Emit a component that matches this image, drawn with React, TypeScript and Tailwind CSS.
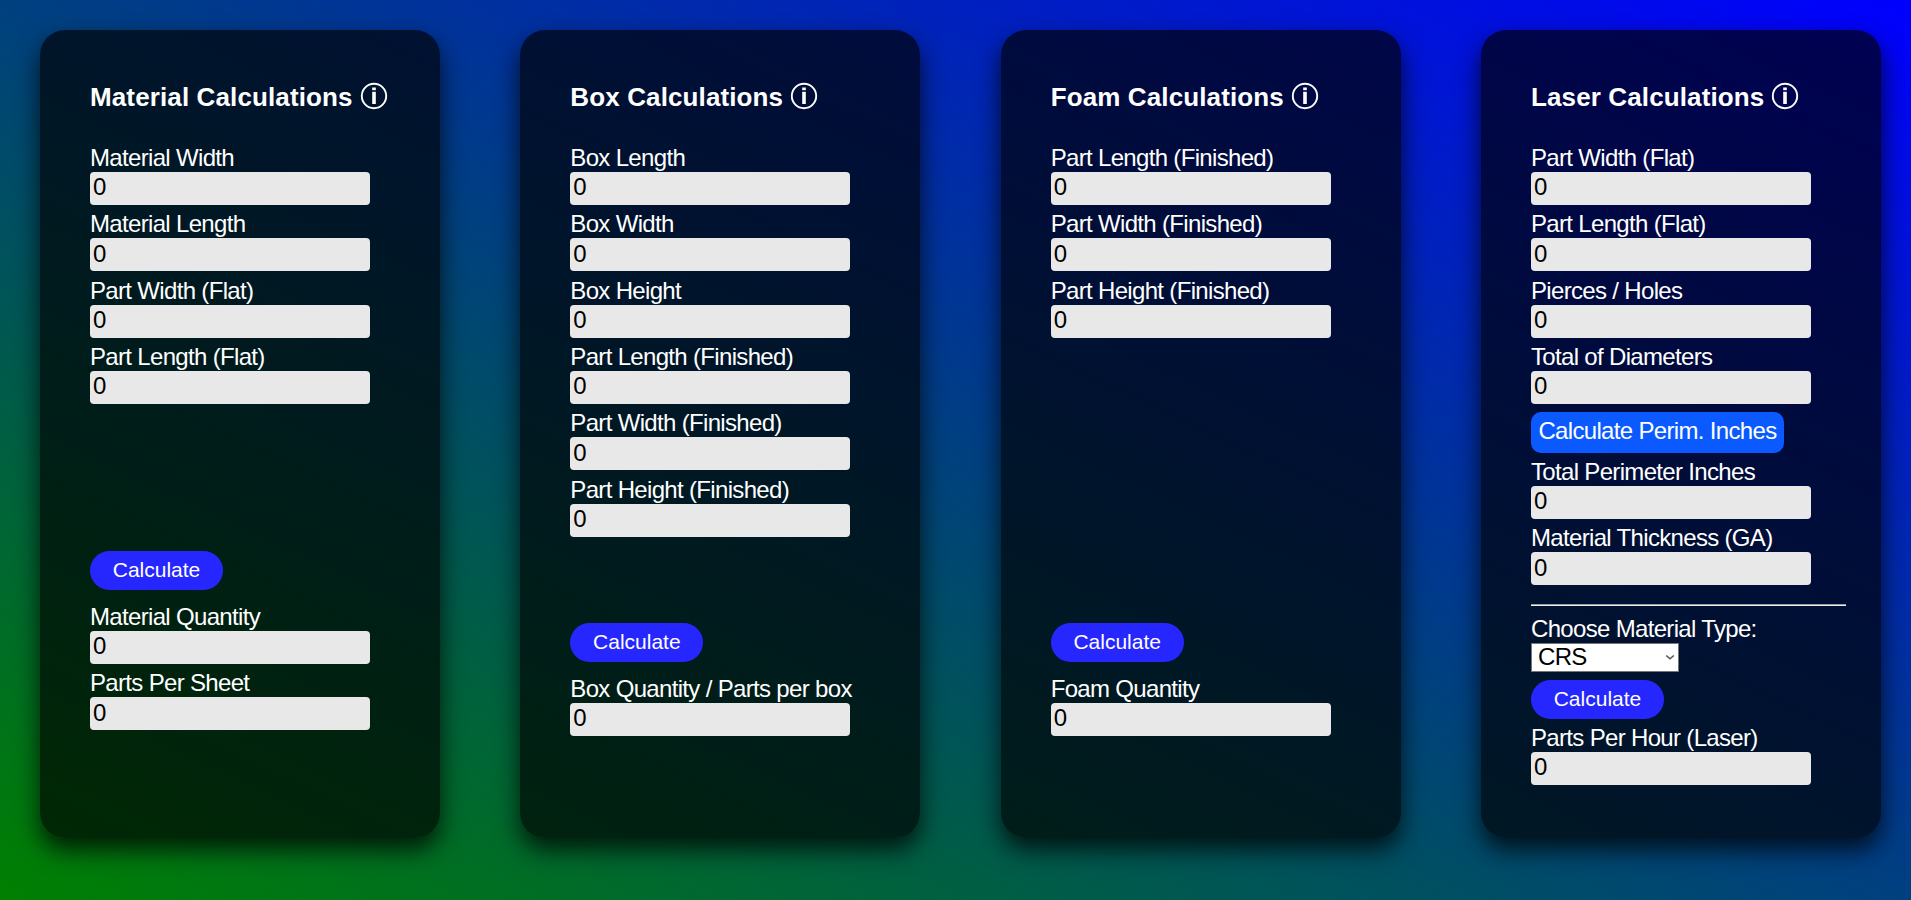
import { useState } from "react";

function InfoIcon() {
  return (
    <svg className="mt-[2.3px] ml-[7px] h-[28px] w-[28px] shrink-0" viewBox="0 0 28 28" fill="none">
      <circle cx="14" cy="14" r="12.2" stroke="white" strokeWidth="1.9" />
      <rect x="12.2" y="5.5" width="3.6" height="2.7" fill="white" />
      <rect x="12.2" y="9.8" width="3.6" height="12.2" fill="white" />
    </svg>
  );
}

function Title({ text }: { text: string }) {
  return (
    <h2 className="flex h-[58.67px] items-start whitespace-nowrap text-[26px] leading-[35px] font-bold tracking-[0.12px] text-white">
      <span>{text}</span>
      <InfoIcon />
    </h2>
  );
}

function Label({ text }: { text: string }) {
  return (
    <span className="block h-[27px] whitespace-nowrap text-[24px] leading-[25px] tracking-[-0.67px] text-white">
      {text}
    </span>
  );
}

function Field({ label }: { label: string }) {
  const [value, setValue] = useState("0");
  return (
    <label className="block h-[66.33px] pt-[6.33px]">
      <Label text={label} />
      <input
        className="block h-[33px] w-[280px] rounded-[4px] bg-[#e8e8e8] pr-[2px] pb-[2px] pl-[3px] text-[24px] leading-[27px] tracking-[-0.67px] text-black outline-none"
        value={value}
        onChange={(e) => setValue(e.target.value)}
      />
    </label>
  );
}

function CalculateButton() {
  return (
    <button className="block h-[39px] w-[133px] rounded-[20px] bg-[#2626ff] pb-[2px] text-[21px] leading-[37px] text-white">
      Calculate
    </button>
  );
}

function Card({ title, children }: { title: string; children: React.ReactNode }) {
  return (
    <section className="h-[807.5px] w-[400px] shrink-0 rounded-[25px] bg-black/67 px-[50px] pt-[50px] shadow-[0_12px_25px_rgba(0,0,0,0.75)]">
      <Title text={title} />
      {children}
    </section>
  );
}

function Fields({ labels }: { labels: string[] }) {
  return (
    <div>
      {labels.map((l) => (
        <Field key={l} label={l} />
      ))}
    </div>
  );
}

export default function App() {
  return (
    <main className="flex h-[900px] w-full items-start gap-[80.33px] overflow-hidden bg-[linear-gradient(to_top_right,#008000,#0000ff)] pt-[30px] pl-[40px] font-['Liberation_Sans',Arial,sans-serif]">
      <Card title="Material Calculations">
        <Fields labels={["Material Width", "Material Length", "Part Width (Flat)", "Part Length (Flat)"]} />
        <div className="pt-[146.8px]">
          <CalculateButton />
        </div>
        <div className="pt-[7.67px]">
          <Fields labels={["Material Quantity", "Parts Per Sheet"]} />
        </div>
      </Card>

      <Card title="Box Calculations">
        <Fields
          labels={[
            "Box Length",
            "Box Width",
            "Box Height",
            "Part Length (Finished)",
            "Part Width (Finished)",
            "Part Height (Finished)",
          ]}
        />
        <div className="pt-[86px]">
          <CalculateButton />
        </div>
        <div className="pt-[7.67px]">
          <Fields labels={["Box Quantity / Parts per box"]} />
        </div>
      </Card>

      <Card title="Foam Calculations">
        <Fields labels={["Part Length (Finished)", "Part Width (Finished)", "Part Height (Finished)"]} />
        <div className="pt-[285px]">
          <CalculateButton />
        </div>
        <div className="pt-[7.67px]">
          <Fields labels={["Foam Quantity"]} />
        </div>
      </Card>

      <Card title="Laser Calculations">
        <Fields labels={["Part Width (Flat)", "Part Length (Flat)", "Pierces / Holes", "Total of Diameters"]} />
        <div className="pt-[8px]">
          <button className="block h-[41px] w-[253px] rounded-[10px] bg-[#0a5aff] pb-[4px] text-[24px] leading-[37px] tracking-[-0.67px] whitespace-nowrap text-white">
            Calculate Perim. Inches
          </button>
        </div>
        <div className="-mt-[0.33px]">
          <Fields labels={["Total Perimeter Inches", "Material Thickness (GA)"]} />
        </div>
        <div className="mt-[18.67px] h-[2px] w-[315px] border-t border-[#9a9a9a] bg-[#eeeeee]" />
        <div className="pt-[10px]">
          <Label text="Choose Material Type:" />
          <div className="flex h-[29px] w-[148px] items-center justify-between border border-[#767676] bg-white pr-[3px] pl-[6px] text-[24px] leading-[25px] tracking-[-0.67px] text-black">
            <span className="pb-[2px]">CRS</span>
            <svg className="h-[10px] w-[10px]" viewBox="0 0 10 10" fill="none">
              <path d="M1.2 3.5 L5 6.8 L8.8 3.5" stroke="#555" strokeWidth="1.6" />
            </svg>
          </div>
        </div>
        <div className="pt-[8px]">
          <CalculateButton />
        </div>
        <div className="-mt-[0.33px]">
          <Fields labels={["Parts Per Hour (Laser)"]} />
        </div>
      </Card>
    </main>
  );
}
